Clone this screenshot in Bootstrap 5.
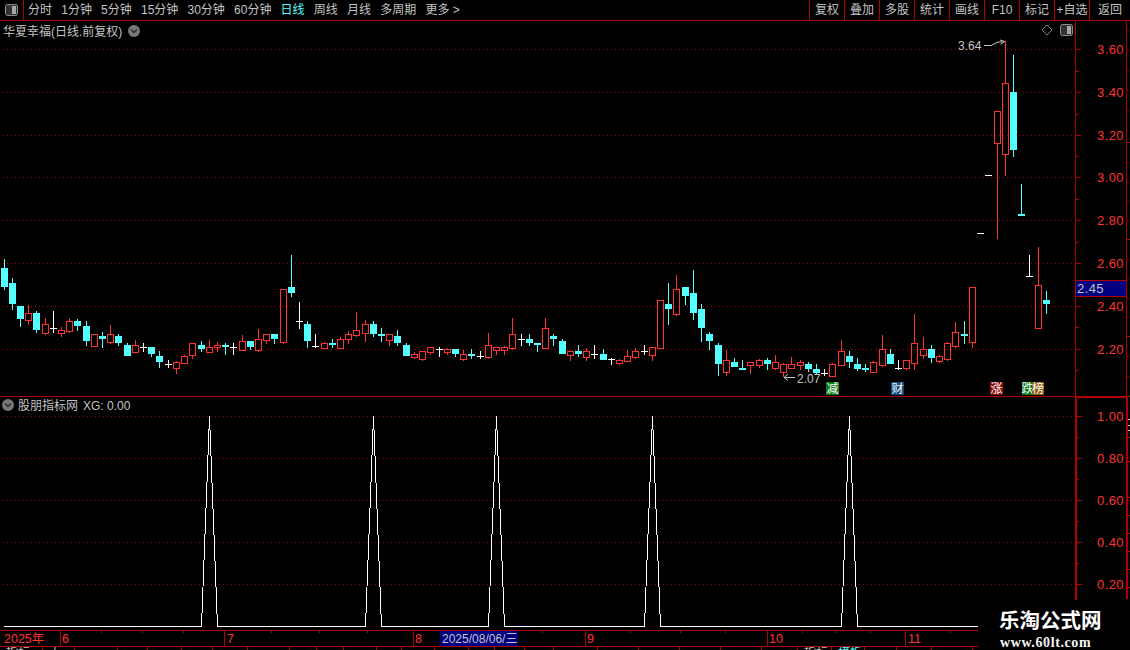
<!DOCTYPE html>
<html lang="zh">
<head>
<meta charset="utf-8">
<title>华夏幸福</title>
<link href="https://cdn.jsdelivr.net/npm/bootstrap@5.3.0/dist/css/bootstrap.min.css" rel="stylesheet">
<style>
html,body{background:#000;margin:0;overflow:hidden}
.stage{width:1130px;height:650px;position:relative;background:#000;color:#c4c4c4;font:12px/1 "Liberation Sans","Noto Sans CJK SC",sans-serif}
.toolbar{height:21px;border-bottom:1px solid #b00000;font-size:12px;white-space:nowrap}
.tool-icon{width:24px;border-right:1px solid #b00000}
.period-list{gap:9.2px;padding-left:4px}
.period-on{color:#54ffff}
.tool-btn{width:35px;border-left:1px solid #b00000;text-align:center}
.tool-end{width:41px}
.pane{display:block}
.pane text{font-family:"Liberation Sans","Noto Sans CJK SC",sans-serif;font-size:12px;fill:#c4c4c4}
.pane text.axis-num{fill:#ff3232;font-size:13px;letter-spacing:.4px}
.pane text.axis-tag{font-size:13px;letter-spacing:.4px}
.pane text.tag-txt{fill:#fff;text-anchor:middle}
.pane text.time-num{fill:#ff3232;font-size:12.5px}
.shape{shape-rendering:crispEdges}
.foot-row{height:3px;overflow:hidden;font-size:12px}
.foot-cell{border-right:1px solid #b00000;padding-left:6px;height:3px;line-height:13px;white-space:nowrap;overflow:hidden;flex:none}
.foot-on{color:#54ffff}
.mark-box{position:absolute;left:978px;top:600px;width:152px;height:50px;background:#000;color:#fff;padding-top:9px;padding-left:21px}
.mark-cn{font:700 20.5px/1.05 "Noto Sans CJK SC",sans-serif;color:#fff}
.mark-url{font:700 14px/1 "Liberation Serif",serif;margin-top:5px;letter-spacing:.6px;padding-left:1px;color:#f4f4f4}
</style>
</head>
<body>
<div class="stage d-flex flex-column">
  <div class="toolbar d-flex align-items-center justify-content-between">
    <div class="d-flex align-items-center h-100">
      <div class="tool-icon h-100 d-flex align-items-center justify-content-center">
        <svg width="13" height="12" viewBox="0 0 13 12"><rect x=".5" y=".5" width="12" height="11" rx="2" fill="#333" stroke="#8c8c8c"/><rect x="7" y="2" width="4" height="8" fill="#a8a8a8"/></svg>
      </div>
      <div class="period-list d-flex">
        <span>分时</span><span>1分钟</span><span>5分钟</span><span>15分钟</span><span>30分钟</span><span>60分钟</span><span class="period-on">日线</span><span>周线</span><span>月线</span><span>多周期</span><span>更多 &gt;</span>
      </div>
    </div>
    <div class="d-flex h-100">
      <div class="tool-btn d-flex align-items-center justify-content-center">复权</div>
      <div class="tool-btn d-flex align-items-center justify-content-center">叠加</div>
      <div class="tool-btn d-flex align-items-center justify-content-center">多股</div>
      <div class="tool-btn d-flex align-items-center justify-content-center">统计</div>
      <div class="tool-btn d-flex align-items-center justify-content-center">画线</div>
      <div class="tool-btn d-flex align-items-center justify-content-center">F10</div>
      <div class="tool-btn d-flex align-items-center justify-content-center">标记</div>
      <div class="tool-btn d-flex align-items-center justify-content-center">+自选</div>
      <div class="tool-btn tool-end d-flex align-items-center justify-content-center">返回</div>
    </div>
  </div>
  <svg id="mainPane" class="pane" width="1130" height="377" viewBox="0 21 1130 377"></svg>
  <svg id="subPane" class="pane" width="1130" height="232" viewBox="0 398 1130 232"></svg>
  <svg id="timePane" class="pane" width="1130" height="17" viewBox="0 630 1130 17"></svg>
  <div class="foot-row d-flex" id="footRow"></div>
  <div class="mark-box">
    <div class="mark-cn">乐淘公式网</div>
    <div class="mark-url">www.60lt.com</div>
  </div>
</div>
<script src="https://cdn.jsdelivr.net/npm/bootstrap@5.3.0/dist/js/bootstrap.bundle.min.js"></script>
<script>
var RED='#ff3232',CY='#54ffff',WH='#ffffff',LINE='#b00000',DOT='#a00000';
// candle data read from the picture: column x, kind, high, body top, body bottom, low
var Z3=[[13,'d',27,54,110,117],[37,'d',85,99,161,177],[61,'d',168,168,207,227],[85,'u',166,190,209,221],[109,'d',183,189,240,245],[136,'u',205,223,248,251],[160,'w',183,235,235,245],[184,'u',232,241,248,258],[208,'u',205,214,242,245],[232,'d',208,214,228,240],[259,'d',213,228,273,285],[283,'u',253,253,287,287],[307,'d',246,259,267,290],[331,'u',225,253,275,279],[355,'d',252,259,279,285],[382,'d',280,286,318,318],[406,'u',270,286,305,305],[430,'w',280,292,292,303],[454,'d',292,292,311,317],[478,'d',304,318,336,351],[504,'w',331,342,342,352],[529,'u',334,337,353,369],[553,'u',316,319,338,338],[577,'u',280,280,315,324],[604,'d',273,285,297,303],[628,'u',270,292,305,305],[652,'u',277,286,292,303],[676,'d',279,285,291,312],[700,'w',280,292,292,312],[727,'u',255,274,299,299],[751,'d',273,273,291,297],[775,'u',238,268,299,302],[799,'u',253,253,269,279],[823,'d',252,252,267,279],[850,'u',118,118,275,278],[874,'d',15,111,129,138],[898,'w',156,214,214,234],[922,'d',213,222,273,291],[946,'w',252,287,287,290],[973,'u',276,280,293,293],[997,'d',267,280,285,291],[1021,'u',262,268,293,293],[1045,'u',243,253,268,279]];
var Z4=[[19,'u',156,211,224,228],[46,'u',180,193,218,243],[70,'d',183,192,222,228],[94,'d',205,222,228,243],[118,'u',223,223,239,255],[142,'d',210,228,249,255],[169,'d',249,255,288,288],[193,'u',277,283,290,293],[217,'u',273,273,296,299],[241,'u',262,262,275,282],[267,'w',261,267,267,288],[292,'u',265,268,275,282],[316,'d',267,267,282,288],[340,'u',270,283,297,299],[364,'d',267,282,288,294],[390,'w',273,288,288,294],[415,'u',219,256,290,294],[439,'u',260,262,270,282],[463,'u',258,262,270,282],[487,'u',174,223,264,267],[513,'w',222,238,238,255],[538,'d',222,237,249,255],[562,'d',249,249,255,273],[586,'u',174,205,264,264],[610,'d',222,228,237,255],[637,'d',237,243,282,282],[661,'u',273,273,285,300],[685,'d',255,273,282,288],[709,'u',264,274,291,300],[733,'w',255,282,282,294],[760,'d',267,282,300,300],[784,'w',294,297,297,312],[808,'u',297,300,308,312],[832,'u',270,289,303,303],[856,'u',264,273,291,294],[882,'w',255,273,273,282],[907,'u',262,262,285,300],[931,'u',121,121,264,264],[955,'d',69,132,147,192],[979,'u',45,88,162,165],[1006,'d',81,81,108,132],[1030,'d',30,99,159,177]];
var Z5=[[34,'d',102,117,174,213],[58,'d',186,192,213,237],[85,'d',219,225,282,315],[109,'u',240,270,306,315],[133,'d',264,276,291,291],[157,'d',270,294,297,297],[181,'u',277,277,285,309],[208,'u',268,271,285,291],[232,'d',264,270,282,297],[256,'u',255,277,293,297],[280,'u',279,283,306,318],[304,'u',262,283,293,293],[331,'u',270,277,286,297],[355,'d',276,282,297,303],[379,'d',282,297,309,312],[403,'w',297,309,309,315],[427,'u',280,283,317,317],[454,'u',210,244,285,285],[478,'d',243,258,276,291],[502,'d',264,282,297,300],[526,'d',282,293,297,303],[550,'u',273,276,306,306],[577,'u',195,238,285,288],[601,'d',237,252,282,282],[625,'w',270,294,294,297],[649,'u',270,271,294,297],[673,'u',132,220,279,297],[700,'u',201,238,255,264],[724,'d',225,237,264,276],[748,'u',255,259,273,276],[772,'u',216,220,267,270],[796,'u',156,187,228,231],[823,'d',153,192,198,219],[847,'u',51,51,216,231]];
var Z6=[[90,'w',580,580,580,580],[114,'w',406,406,406,406],[142,'u',214,214,310,593],[166,'u',3,130,343,404],[190,'d',45,157,329,347],[214,'d',432,522,527,527],[238,'w',645,709,709,709],[265,'u',621,736,864,864]];
var Z7=[[1069,'d',63,90,102,129]];
var candles=[];
function load(list,ox,oy){list.forEach(function(c){candles.push([Math.floor(ox+c[0]/3),c[1],oy+c[2]/3,oy+c[3]/3,oy+c[4]/3,oy+c[5]/3].map(function(v){return typeof v==='number'?Math.round(v):v}))})}
load(Z3,0,250);load(Z4,350,260);load(Z5,690,270);load(Z6,950,40);load(Z7,690,270);
function rect(x,y,w,h,f){return '<rect class="shape" x="'+x+'" y="'+y+'" width="'+w+'" height="'+h+'" fill="'+f+'"/>'}
function hline(x1,x2,y,c,dash){return '<line class="shape" x1="'+x1+'" x2="'+x2+'" y1="'+(y+.5)+'" y2="'+(y+.5)+'" stroke="'+c+'"'+(dash?' stroke-dasharray="1 3"':'')+'/>'}
function vline(x,y1,y2,c,w){return rect(x,y1,w||1,y2-y1,c)}
function txt(x,y,s,cls){return '<text x="'+x+'" y="'+y+'"'+(cls?' class="'+cls+'"':'')+'>'+s+'</text>'}
function chevron(cx,cy){return '<circle cx="'+cx+'" cy="'+cy+'" r="6" fill="#787878"/><path d="M'+(cx-3)+' '+(cy-1.5)+'l3 3l3-3" fill="none" stroke="#2a2a2a" stroke-width="1.4"/>'}
var m='';
[[49,'3.60'],[92,'3.40'],[135,'3.20'],[177,'3.00'],[220,'2.80'],[263,'2.60'],[306,'2.40'],[349,'2.20']].forEach(function(g){
  m+=hline(3,1075,g[0],DOT,true)+hline(1075,1081,g[0],LINE)+txt(1097,g[0]+5,g[1],'axis-num');
});
[71,114,156,199,242,285,327,370].forEach(function(y){m+=hline(1075,1079,y,LINE)});
m+=vline(1075,21,396,LINE)+vline(1126,21,396,LINE);
[142,239,336].forEach(function(y){m+=hline(1126,1130,y,LINE)});
[30,50,70,90,110,162,182,201,220,259,278,298,317,356,376].forEach(function(y){m+=hline(1126,1129,y,'#8c0000')});
m+=hline(0,1130,396,LINE)+rect(1075,396,52,2,LINE);
candles.forEach(function(c){
  var x=c[0],k=c[1],hi=c[2],t=c[3],b=c[4],lo=c[5],col=k==='u'?RED:k==='d'?CY:WH;
  if(k==='w'){m+=vline(x,hi,lo+1,col)+rect(x-3,t,7,1,col);return}
  if(hi<t)m+=vline(x,hi,t,col);
  if(lo>b)m+=vline(x,b,lo+1,col);
  if(k==='d'){m+=rect(x-3,t,7,Math.max(b-t,2),col)}
  else{m+=rect(x-3,t,7,1,col)+rect(x-3,b,7,1,col)+rect(x-3,t,1,b-t+1,col)+rect(x+3,t,1,b-t+1,col)}
});
m+=txt(958,50,'3.64')+'<path d="M984 45.500h7l7-3.500h6M1000 40l4.500 1.500l-4 3" fill="none" stroke="#c4c4c4"/>';
m+=txt(797,383,'2.07')+'<path d="M795 377.500H784M788 374l-4 3.500l4 3" fill="none" stroke="#c4c4c4"/>';
[[826,13,'#0a7a14','减'],[891,13,'#0f4a80','财'],[990,13,'#8a0a0a','涨'],[1022,11,'#0a7a14','跌'],[1032,12,'#8a5a10','榜']].forEach(function(t){
  m+=rect(t[0],382,t[1],13,t[2])+txt(t[0]+t[1]/2,393,t[3],'tag-txt');
});
m+=rect(1076,280,50,16,'#000080')+hline(1075,1127,280,LINE)+hline(1075,1127,296,LINE)+txt(1077,293,'2.45','axis-tag');
m+=txt(3,36,'华夏幸福(日线.前复权)')+chevron(134,31);
m+='<path d="M1047 25l5 5l-5 5l-5-5z" fill="none" stroke="#888"/>';
m+='<rect x="1060.500" y="24.500" width="12" height="11" rx="2" fill="#333" stroke="#8c8c8c"/>'+rect(1067,26,4,8,'#a8a8a8');
document.getElementById('mainPane').innerHTML=m;

var s='';
[[416,'1.00'],[458,'0.80'],[500,'0.60'],[542,'0.40'],[584,'0.20']].forEach(function(g){
  s+=hline(3,1075,g[0],DOT,true)+hline(1075,1082,g[0],LINE)+txt(1097,g[0]+5,g[1],'axis-num');
});
[437,479,521,563].forEach(function(y){s+=hline(1075,1079,y,LINE)});
s+=vline(1075,398,600,LINE,2)+vline(1126,398,599,LINE,2);
[437,461,497,515,533,551,569,587].forEach(function(y){s+=hline(1126,1130,y,LINE)});
[419,425,430].forEach(function(y){s+=hline(1128,1130,y,'#c4c4c4')});
var path='M4 626.500';
[209,373,496,652,849].forEach(function(c){
  path+='H'+(c-8)+'.500L'+c+'.500 416.500L'+(c+8)+'.500 626.500';
});
path+='H978';
s+='<path class="shape" d="'+path+'" fill="none" stroke="#fff"/>';
s+=chevron(8,405)+txt(18,410,'股朋指标网')+txt(83,410,'XG: 0.00');
document.getElementById('subPane').innerHTML=s;

var t=hline(0,978,630,LINE)+hline(0,978,646,LINE);
[101,142,183,271,319,367,542,630,680,725,802,836,870,950].forEach(function(x){t+=vline(x,631,633,LINE)});
[60,224,413,585,767,905].forEach(function(x){t+=vline(x,630,646,LINE)});
t+=txt(4,643,'2025年','time-num');
[[62,'6'],[227,'7'],[415,'8'],[587,'9'],[769,'10'],[908,'11']].forEach(function(a){t+=txt(a[0],643,a[1],'time-num')});
t+=rect(440,631,78,15,'#000080')+txt(442,643,'2025/08/06/三');
document.getElementById('timePane').innerHTML=t;

var f='',px=0;
var labels={42:['指标'],73:['大'],808:['指标'],840:['模板','foot-on']};
[42,73,115,144,177,207,241,282,308,334,366,390,422,455,480,509,537,580,620,660,700,740,775,808,840,871,905,945].forEach(function(x){
  var l=labels[x]||[''];
  f+='<div class="foot-cell '+(l[1]||'')+'" style="width:'+(x-px+1)+'px">'+l[0]+'</div>';px=x;
});
document.getElementById('footRow').innerHTML=f;
</script>
</body>
</html>
